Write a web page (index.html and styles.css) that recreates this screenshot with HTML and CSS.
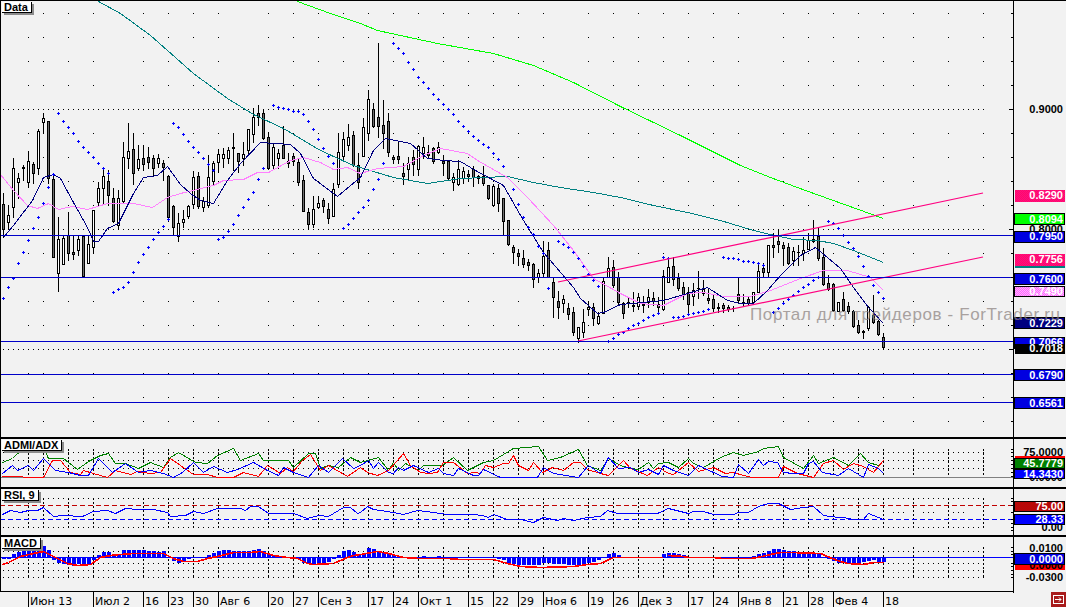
FILE: index.html
```html
<!DOCTYPE html>
<html lang="ru">
<head>
<meta charset="utf-8">
<title>Data</title>
<link rel="stylesheet" href="styles.css">
</head>
<body>
<div class="terminal">
  <section class="panel panel-main">
    <svg id="main" class="plot" data-top="1" data-height="436"></svg>
    <div class="legend">Data</div>
  </section>
  <section class="panel panel-sub">
    <svg id="adx" class="plot" data-top="439" data-height="48"></svg>
    <div class="legend">ADMI/ADX</div>
  </section>
  <section class="panel panel-sub">
    <svg id="rsi" class="plot" data-top="489" data-height="46"></svg>
    <div class="legend">RSI, 9</div>
  </section>
  <section class="panel panel-sub">
    <svg id="macd" class="plot" data-top="537" data-height="54"></svg>
    <div class="legend">MACD</div>
  </section>
  <footer class="time-row">
    <svg id="time" class="time-scale" width="1014" height="15" viewBox="0 592 1014 15"></svg>
    <button class="corner" type="button" aria-label="Вперёd">
      <svg width="15" height="15" viewBox="0 0 15 15">
        <rect class="corner-frame" x="2.5" y="3.5" width="10" height="8"></rect>
        <path class="corner-arrow" d="M4 7.5h6M8 5.5l2 2-2 2"></path>
      </svg>
    </button>
  </footer>
</div>
<script src="chart.js"></script>
</body>
</html>
```

FILE: styles.css
```css
html, body {
  margin: 0;
  padding: 0;
  height: 607px;
  overflow: hidden;
  background: #f2f2f2;
}

.terminal {
  display: flex;
  flex-direction: column;
  width: 1066px;
  height: 607px;
}

.panel {
  position: relative;
  border-left: 1px solid #000;
}

.panel-main {
  border-top: 1px solid #000;
}

.panel-sub {
  border-top: 2px solid #000;
}

.plot {
  display: block;
}

.legend {
  position: absolute;
  left: 1px;
  top: 1px;
  height: 10px;
  padding: 0 3px 0 2px;
  background: #fff;
  border-right: 1px solid #000;
  border-bottom: 1px solid #000;
  box-shadow: 2px 2px 0 #8c8c8c;
  font: bold 11px/10px "Liberation Sans", Arial, sans-serif;
  color: #000;
  white-space: nowrap;
}

.time-row {
  display: flex;
  justify-content: space-between;
  align-items: flex-start;
  height: 16px;
}

.time-scale {
  display: block;
  border-top: 1px solid #000;
}

.corner {
  width: 15px;
  height: 15px;
  margin: 1px 0 0;
  padding: 0;
  border: 0;
  background: #a81c1c;
  display: block;
}

.corner svg {
  display: block;
}

.corner-frame {
  fill: none;
  stroke: #fff;
  shape-rendering: crispEdges;
}

.corner-arrow {
  fill: none;
  stroke: #fff;
}

/* chart marks */
.crisp {
  shape-rendering: crispEdges;
}

.ink { fill: #000; }
.body-up { fill: #fff; }
.body-down { fill: #6e6e6e; }
.sar { fill: #0000ff; }
.bars { fill: #0000ff; }

.line {
  fill: none;
  stroke-width: 1;
}

.line-bold { stroke-width: 1.6; }
.teal { stroke: #008080; }
.lime { stroke: #00ff00; }
.navy { stroke: #000080; }
.orchid { stroke: #ff80ff; }
.rose { stroke: #ff0080; stroke-width: 1.2; }
.level { stroke: #0000c8; }
.base { stroke: #808080; }
.dgreen { stroke: #008000; }
.red { stroke: #ff0000; }
.blue { stroke: #0000ff; }
.dashed-red { stroke: #c00000; stroke-dasharray: 5 3; }
.dashed-blue { stroke: #0000ff; stroke-dasharray: 5 3; }
.vdash { stroke: #000; stroke-dasharray: 2 2; fill: none; }
.axis { stroke: #000; fill: none; }

.price {
  font: bold 11px "Liberation Sans", Arial, sans-serif;
  text-anchor: end;
  fill: #000;
}

.price-light { fill: #fff; }

.tag-pink { fill: url(#chk-pink); }
.tag-lime { fill: #00ff00; stroke: #000; }
.tag-blue { fill: #0000e0; stroke: #000; }
.tag-teal { fill: #008080; }
.tag-light { fill: url(#chk-light); stroke: #000; }
.tag-navy { fill: #000080; stroke: #000; }
.tag-black { fill: #000; }
.tag-green { fill: #008000; stroke: #000; }
.tag-vivid { fill: #0000ff; stroke: #000; }
.tag-red { fill: #ff0000; }
.tag-dred { fill: url(#chk-red); stroke: #000; }

.chk-a { fill: #ff0d80; }
.chk-b { fill: #ff0a6a; }
.chk-c { fill: #ff66ff; }
.chk-d { fill: #ffb0ff; }
.chk-e { fill: #c80000; }
.chk-f { fill: #a81010; }

.watermark {
  font: 17px "Liberation Sans", Arial, sans-serif;
  fill: #8c8280;
  opacity: 0.72;
}

.time-label {
  font: 11px "DejaVu Sans", sans-serif;
  fill: #000;
}
```

FILE: chart.js
```js
(function () {
  var candleData = `3 193 204 229 237 1|8 205 215 222 228 0|13 158 168 207 217 0|18 173 178 182 198 0|23 165 167 168 180 1|28 151 161 182 187 0|33 162 164 173 183 1|38 129 131 168 174 0|43 113 118 122 132 0|48 121 121 178 183 1|53 173 179 257 257 1|58 217 239 273 291 0|63 235 238 264 264 0|68 212 235 253 260 1|73 235 252 254 259 1|78 235 239 250 255 0|83 235 236 276 277 1|88 236 244 263 263 0|93 210 210 247 253 0|98 182 188 202 205 0|103 168 176 188 204 0|108 170 181 195 205 1|113 188 198 221 222 1|118 190 198 225 228 0|123 142 157 201 202 0|128 123 151 158 168 0|133 133 149 173 184 1|138 145 159 168 170 0|143 145 158 164 170 1|148 147 157 162 168 1|153 155 158 168 175 1|158 154 158 163 167 0|163 160 163 167 180 1|168 175 176 217 221 1|173 205 206 227 235 1|178 213 223 236 241 0|183 210 219 222 227 0|188 205 206 216 218 0|193 171 177 204 208 0|198 172 176 206 208 1|203 197 201 207 211 0|208 155 177 205 207 0|213 161 163 181 185 0|218 149 154 162 172 0|223 148 154 158 167 0|228 147 150 158 163 0|233 133 147 148 170 1|238 153 153 161 172 1|243 142 154 158 165 0|248 129 129 150 153 0|253 108 117 134 142 0|258 105 113 117 125 1|263 109 113 138 139 1|268 132 137 168 169 1|273 143 147 165 169 0|278 149 153 158 168 0|283 126 145 158 158 1|288 153 161 163 167 1|293 153 156 161 165 1|298 158 162 182 185 1|303 175 180 211 211 1|308 208 212 224 228 1|313 196 209 224 227 0|318 196 203 207 208 0|323 198 200 206 212 1|328 203 209 218 223 1|333 183 189 216 216 0|338 133 152 184 187 0|343 132 139 156 160 0|348 124 137 145 150 0|353 131 135 165 166 1|358 153 165 182 188 1|363 118 127 156 156 0|368 90 99 133 140 0|373 103 109 126 127 1|378 43 117 126 137 1|383 100 125 133 148 1|388 113 121 152 156 1|393 155 157 159 163 1|398 142 156 159 163 1|403 163 173 176 184 1|408 157 163 169 179 0|413 150 157 164 175 1|418 145 146 169 175 0|423 137 147 153 158 0|428 145 152 155 157 1|433 147 148 161 163 1|438 142 147 152 153 0|443 155 161 163 175 1|448 160 161 178 180 1|453 173 177 182 190 0|458 160 169 184 185 0|463 167 171 178 183 0|468 170 174 176 180 1|473 166 169 177 186 1|478 175 176 178 183 1|483 166 176 183 185 1|488 185 185 198 199 1|493 184 186 205 206 0|498 184 188 203 211 1|503 198 198 221 235 1|508 220 220 244 245 1|513 245 247 252 263 1|518 249 253 256 265 1|523 250 258 264 267 1|528 259 262 265 270 1|533 263 264 279 287 1|538 269 273 277 282 0|543 241 256 273 277 0|548 242 250 277 277 1|553 277 282 297 317 1|558 291 301 307 318 1|563 295 299 303 312 0|568 303 308 314 319 1|573 307 312 332 335 1|578 327 327 338 342 0|583 309 322 332 337 0|588 302 307 309 315 0|593 303 307 318 325 1|598 312 316 323 324 0|603 277 281 313 313 0|608 257 268 277 277 0|613 260 267 285 287 1|618 272 277 302 304 1|623 302 303 313 318 1|628 297 302 303 307 1|633 292 305 306 311 1|638 293 297 306 309 0|643 296 304 305 312 1|648 289 297 302 307 0|653 292 298 301 305 1|658 297 304 307 313 1|663 270 276 309 310 0|668 257 267 282 282 0|673 257 266 279 285 1|678 273 278 288 290 1|683 282 287 295 299 1|688 287 292 304 312 1|693 283 290 296 305 0|698 271 288 288 298 1|703 280 289 293 295 0|708 288 298 300 303 1|713 294 299 308 311 1|718 303 307 308 312 1|723 303 305 308 312 1|728 305 307 309 311 1|733 306 308 308 311 1|738 277 294 300 302 1|743 294 302 303 305 1|748 297 299 303 304 1|753 292 292 302 303 0|758 263 271 292 292 0|763 263 268 272 276 1|768 245 245 272 276 0|773 233 245 247 257 1|778 229 241 244 252 1|783 242 245 248 265 1|788 243 247 263 264 1|793 247 251 260 265 0|798 245 252 252 265 1|803 237 250 253 260 0|808 233 240 249 249 0|813 220 239 241 242 0|818 228 236 258 260 1|823 248 257 284 285 1|828 275 283 289 290 1|833 283 284 310 311 1|838 302 302 311 311 0|843 292 299 310 311 1|848 302 306 311 313 1|853 310 311 326 327 1|858 320 325 332 333 1|863 330 331 332 338 1|868 306 307 328 330 0|873 295 315 322 323 1|878 320 321 334 335 1|883 333 337 347 348 1`;

  var teal = [[98,1],[120,13],[150,35],[167,50],[193,73],[227,98],[253,114],[283,128],[320,150],[353,165],[393,177],[427,183],[460,178],[507,176],[533,182],[560,187],[593,192],[620,197],[653,205],[687,212],[720,220],[753,230],[770,234],[793,239],[817,240],[833,243],[853,250],[883,262]];
  var lime = [[297,1],[330,13],[360,23],[377,30],[437,43],[493,53],[533,65],[573,82],[620,106],[680,135],[740,165],[770,177],[805,190],[883,218]];
  var navy = [[3,237],[13,225],[32,200],[43,177],[53,174],[60,178],[73,202],[87,227],[93,241],[98,241],[107,228],[118,223],[133,193],[143,177],[157,175],[167,166],[180,184],[190,193],[200,200],[213,203],[227,180],[240,163],[260,142],[290,144],[300,153],[313,178],[337,196],[350,185],[360,177],[373,150],[385,138],[410,143],[427,158],[443,160],[460,161],[475,170],[503,185],[523,220],[543,252],[573,287],[580,298],[597,313],[603,312],[620,304],[663,300],[687,293],[707,287],[727,300],[740,303],[753,303],[767,290],[780,275],[800,255],[815,247],[840,268],[853,287],[868,307],[883,323]];
  var orchid = [[0,174],[13,190],[27,205],[37,208],[48,203],[58,209],[72,206],[87,209],[107,203],[133,203],[152,207],[167,197],[180,193],[213,185],[223,180],[243,179],[257,172],[268,172],[290,160],[303,157],[320,162],[333,169],[347,167],[360,173],[377,168],[403,166],[423,155],[440,148],[467,153],[477,160],[507,177],[527,197],[553,225],[573,250],[593,278],[620,293],[640,303],[663,305],[687,293],[703,292],[723,296],[750,296],[770,290],[800,278],[823,270],[847,270],[870,277],[883,290]];

  var sar = `3 298|8 287|13 278|18 263|23 252|28 240|33 228|38 217|43 203|48 187|53 174|58 113|63 121|68 127|73 133|78 141|83 147|88 152|93 157|98 163|103 168|108 173|113 292|118 289|123 287|128 282|133 272|138 262|143 254|148 247|153 239|158 232|163 226|168 219|173 123|178 127|183 134|188 141|193 147|198 152|203 158|208 164|213 170|218 239|223 237|228 231|233 224|238 215|243 207|248 199|253 192|258 179|263 168|273 105|278 107|283 108|288 109|293 111|298 111|303 114|308 121|313 129|318 139|323 148|328 156|333 163|343 228|348 224|353 218|358 212|363 207|368 200|373 189|378 179|383 163|393 43|398 48|403 53|408 62|413 69|418 77|423 82|428 88|433 94|438 99|443 104|448 109|453 114|458 121|463 126|468 131|473 136|478 140|483 144|488 147|493 153|498 159|503 166|513 189|518 204|523 217|528 227|533 234|538 246|543 253|548 288|558 241|563 244|568 247|573 252|578 258|583 266|588 274|593 280|598 286|608 341|613 338|618 334|623 332|628 328|633 325|638 323|643 320|648 317|653 315|658 313|663 257|668 258|673 317|678 317|683 316|688 314|693 313|698 312|703 311|708 309|723 257|728 258|733 258|738 259|743 261|748 261|753 262|758 263|763 265|773 312|778 308|783 303|788 299|793 295|798 291|803 287|808 284|813 280|818 277|828 221|833 223|838 228|843 235|848 242|853 248|858 256|863 266|868 276|873 285|878 292|883 298`;

  var xs = [28,43,68,93,143,168,193,218,268,293,318,343,368,393,418,443,468,493,518,543,588,613,638,663,688,713,738,783,808,833,858,883,913,948,983];

  /* indicator traces are read off the reference in three 3x crops */
  function crops(a, b, c, oy) {
    function map(list, ox) {
      return list.map(function (p) { return [ox + p[0] / 3, oy + p[1] / 3]; });
    }
    return map(a, 0).concat(map(b, 360).filter(function (p) { return p[0] > 360; }), map(c, 630).filter(function (p) { return p[0] > 630; }));
  }

  var adxGreen = crops(
    [[5,95],[35,85],[50,70],[85,55],[130,50],[145,85],[190,85],[230,118],[265,92],[300,75],[325,70],[345,100],[375,100],[415,115],[450,95],[490,112],[510,80],[535,65],[585,95],[620,100],[650,75],[700,55],[720,90],[775,68],[790,90],[865,90],[880,110],[925,70],[945,70],[960,115],[985,105],[1015,112],[1050,80],[1080,95]],
    [[55,80],[85,120],[100,95],[115,120],[135,100],[175,120],[190,105],[245,105],[280,80],[320,120],[370,95],[400,90],[460,55],[535,48],[560,90],[600,80],[655,58],[680,105],[720,120],[745,85],[780,105],[810,115]],
    [[25,118],[55,95],[70,115],[85,100],[115,95],[145,110],[175,85],[190,100],[220,112],[270,80],[310,65],[340,75],[385,62],[400,55],[445,48],[460,80],[520,115],[550,75],[565,100],[610,80],[655,105],[690,70],[715,95],[745,105],[760,90]], 430);
  var adxRed = crops(
    [[5,138],[130,140],[155,90],[180,90],[210,125],[240,132],[250,120],[280,130],[320,140],[345,120],[390,132],[410,122],[450,130],[480,125],[510,85],[540,105],[580,132],[620,132],[650,140],[700,140],[730,125],[775,138],[800,105],[840,128],[860,110],[880,122],[905,90],[930,72],[960,120],[985,105],[1040,138],[1080,110]],
    [[20,125],[50,135],[85,120],[130,70],[150,105],[180,125],[205,130],[230,125],[250,95],[280,95],[320,130],[345,125],[360,130],[375,105],[400,110],[430,100],[445,100],[460,75],[475,105],[505,120],[520,95],[545,125],[575,112],[610,120],[640,97],[660,97],[680,118],[720,128],[745,135],[790,90],[810,115]],
    [[50,135],[85,110],[115,128],[130,132],[175,95],[205,122],[250,112],[285,128],[310,125],[340,135],[365,140],[445,140],[460,108],[500,128],[550,140],[580,100],[610,90],[640,118],[670,98],[700,108],[730,125],[760,90]], 430);
  var adxBlue = crops(
    [[5,130],[35,105],[50,120],[85,105],[100,120],[130,85],[165,120],[205,125],[240,135],[265,135],[295,85],[335,125],[375,100],[415,125],[450,120],[490,130],[520,140],[545,125],[580,95],[610,125],[640,108],[680,125],[710,118],[760,95],[800,120],[835,135],[850,110],[880,125],[925,140],[955,105],[985,125],[1025,85],[1060,115],[1080,105]],
    [[25,90],[40,115],[55,97],[85,125],[100,130],[115,110],[130,120],[160,105],[205,125],[235,115],[250,130],[280,135],[295,115],[340,135],[355,135],[370,118],[420,140],[530,142],[550,112],[580,130],[655,140],[685,105],[720,130],[745,80],[775,115],[810,112]],
    [[25,125],[55,118],[85,132],[100,105],[130,120],[175,135],[205,105],[250,125],[275,138],[310,140],[325,102],[355,128],[385,88],[400,105],[415,92],[440,95],[460,125],[490,130],[520,130],[535,100],[550,92],[575,125],[625,135],[655,115],[700,140],[715,102],[745,115],[760,128]], 430);
  var rsiLine = crops(
    [[5,252],[30,240],[60,245],[85,240],[110,240],[130,232],[160,258],[190,255],[245,258],[280,242],[320,240],[345,248],[375,235],[410,238],[460,238],[500,245],[510,257],[555,255],[580,243],[610,248],[650,235],[720,235],[735,240],[750,227],[775,227],[805,250],[880,250],[920,265],[955,255],[985,258],[1030,232],[1050,232],[1070,248],[1080,245]],
    [[20,228],[40,238],[100,247],[130,253],[170,240],[220,245],[260,253],[335,253],[365,255],[385,262],[400,252],[440,268],[480,268],[520,275],[550,260],[590,270],[610,265],[640,270],[680,260],[720,258],[740,240],[770,250],[810,250]],
    [[50,248],[80,250],[115,235],[175,250],[190,243],[220,243],[250,253],[310,253],[325,245],[355,245],[385,228],[415,220],[445,220],[480,238],[520,232],[550,227],[580,255],[625,262],[640,262],[670,268],[700,268],[715,248],[760,268]], 430);
  var macdSignal = crops(
    [[5,403],[25,395],[60,378],[100,368],[130,362],[160,378],[200,398],[230,404],[270,403],[300,382],[330,375],[360,372],[400,368],[490,368],[520,385],[550,392],[590,392],[620,385],[650,378],[700,366],[750,366],[780,362],[820,375],[860,380],[890,385],[920,398],[940,402],[1000,400],[1040,380],[1060,375],[1080,373]],
    [[50,362],[85,368],[130,380],[180,385],[260,385],[300,388],[400,388],[440,398],[480,408],[540,410],[640,408],[680,403],[720,400],[760,382]],
    [[95,380],[115,375],[160,378],[175,380],[245,380],[275,385],[360,385],[380,380],[420,372],[450,365],[480,365],[570,370],[590,378],[620,390],[650,398],[700,403],[730,397],[760,397]], 430);

  var hist = [-2,-2,3,5,6,7,8,9,11,7,-3,-6,-7,-8,-9,-7,-8,-8,-3,2,5,5,3,3,7,7,7,7,7,6,6,5,6,0,-4,-6,-5,-2,0,0,0,2,4,6,7,7,6,6,6,6,7,8,6,3,2,1,0,0,0,-2,-6,-6,-7,-6,-6,-5,-2,2,6,7,5,3,
    4,9,8,6,5,3,2,0,-1,-1,0,0,1,0,0,1,-1,-1,-1,-1,-1,-1,-1,-1,-1,-1,-1,-2,-3,-6,-7,-8,-8,-8,-8,-8,-6,-6,-7,-7,-7,-8,-8,-8,-7,-6,-5,-3,0,3,4,2,0,0,
    0,0,0,0,0,0,3,4,4,3,2,0,0,0,0,0,0,-1,-1,-1,0,0,0,0,1,3,4,6,8,8,7,6,6,5,5,5,4,3,0,-2,-4,-6,-5,-6,-6,-6,-5,-4,-3,-5,-5];

  function rect(x, y, w, h) {
    return 'M' + x + ' ' + y + 'h' + w + 'v' + h + 'h' + (-w) + 'z';
  }
  function path(cls, d) {
    return '<path class="' + cls + '" d="' + d + '"></path>';
  }
  function poly(cls, pts) {
    var d = pts.map(function (p, i) {
      return (i ? 'L' : 'M') + (Math.round(p[0]) + 0.5) + ' ' + (Math.round(p[1]) + 0.5);
    }).join('');
    return path('line crisp ' + cls, d);
  }
  function seg(cls, x1, y1, x2, y2) {
    return path('line crisp ' + cls, 'M' + x1 + ' ' + (y1 + 0.5) + 'L' + x2 + ' ' + (y2 + 0.5));
  }
  function dotRow(y, from, to) {
    var d = '';
    for (var x = from; x <= to; x += 5) d += rect(x, y, 1, 1);
    return d;
  }
  function tag(cls, y, h, text, textCls, baseline) {
    var out = '<rect class="crisp ' + cls + '" x="1014.5" y="' + (y + 0.5) + '" width="50" height="' + h + '"></rect>';
    if (text) out += '<text class="price ' + (textCls || '') + '" x="1063" y="' + (baseline || y + h - 1) + '">' + text + '</text>';
    return out;
  }
  function label(text, y) {
    return '<text class="price" x="1063" y="' + y + '">' + text + '</text>';
  }
  function ticks(ys, majors) {
    var d = '';
    ys.forEach(function (y) {
      var long = majors && majors.indexOf(y) >= 0;
      d += rect(long ? 1009 : 1011, y, long ? 4 : 2, 1);
    });
    return path('ink crisp', d);
  }
  function axisLine(top, bottom) {
    return path('ink crisp', rect(1013, top, 1, bottom - top));
  }
  function subGrid(rows, top, bottom) {
    var d = '';
    rows.forEach(function (y) { d += dotRow(y, 3, 983); });
    var out = path('ink crisp', d);
    var v = xs.map(function (x) { return 'M' + (x + 0.5) + ' ' + top + 'V' + bottom; }).join('');
    return out + path('vdash crisp', v);
  }

  /* ---------- main panel ---------- */
  var m = '<defs>' +
    '<pattern id="chk-pink" width="2" height="2" patternUnits="userSpaceOnUse"><rect class="chk-a" width="2" height="2"></rect><rect class="chk-b" width="1" height="1"></rect><rect class="chk-b" x="1" y="1" width="1" height="1"></rect></pattern>' +
    '<pattern id="chk-light" width="2" height="2" patternUnits="userSpaceOnUse"><rect class="chk-c" width="2" height="2"></rect><rect class="chk-d" width="1" height="1"></rect><rect class="chk-d" x="1" y="1" width="1" height="1"></rect></pattern>' +
    '<pattern id="chk-red" width="2" height="2" patternUnits="userSpaceOnUse"><rect class="chk-e" width="2" height="2"></rect><rect class="chk-f" width="1" height="1"></rect><rect class="chk-f" x="1" y="1" width="1" height="1"></rect></pattern>' +
    '</defs>';

  var gd = '', tickYs = [];
  for (var k = 0; k * 24 + 13 < 430; k++) {
    var ry = 13 + k * 24;
    tickYs.push(ry);
    if ([109, 229, 349].indexOf(ry) >= 0) {
      gd += dotRow(ry, 3, 983);
    } else {
      xs.forEach(function (x) { gd += rect(x, ry, 1, 1); });
    }
  }
  m += path('ink crisp', gd);

  var wicks = '', ups = '', downs = '', outlines = '';
  candleData.split('|').forEach(function (row) {
    var c = row.split(' ').map(Number);
    var x = c[0], hi = c[1], t = c[2], b = c[3], lo = c[4], dark = c[5];
    wicks += rect(x, hi, 1, lo - hi + 1);
    outlines += rect(x - 1, t, 3, Math.max(1, b - t + 1));
    if (b - t >= 2) {
      var inner = rect(x, t + 1, 1, b - t - 1);
      if (dark) downs += inner; else ups += inner;
    }
  });
  m += path('ink crisp', wicks + outlines) + path('body-up crisp', ups) + path('body-down crisp', downs);

  m += poly('teal', teal) + poly('lime', lime) + poly('orchid', orchid) + poly('navy', navy);

  var sd = '';
  sar.split('|').forEach(function (row) {
    var p = row.split(' ').map(Number);
    sd += rect(p[0] - 1, p[1], 3, 1) + rect(p[0], p[1] - 1, 1, 3);
  });
  m += path('sar crisp', sd);

  m += path('line rose', 'M558 282L983 193') + path('line rose', 'M578 341L983 257');
  [235, 277, 341, 374, 402].forEach(function (y) { m += seg('level', 0, y, 1013, y); });

  m += axisLine(0, 438) + ticks(tickYs, [109, 229, 349]);
  m += label('0.9000', 113);
  m += tag('tag-pink', 189, 12, '0.8290', 'price-light', 199);
  m += label('0.8000', 233);
  m += tag('tag-lime', 213, 11, '0.8094', 'price-light', 223);
  m += tag('tag-blue', 231, 11, '0.7950', 'price-light', 240);
  m += tag('tag-teal', 259, 8, '', '');
  m += tag('tag-pink', 253, 12, '0.7756', 'price-light', 263);
  m += tag('tag-blue', 273, 11, '0.7600', 'price-light', 283);
  m += tag('tag-light', 286, 10, '0.7490', 'price-light', 295);
  m += tag('tag-navy', 317, 11, '0.7229', 'price-light', 327);
  m += tag('tag-blue', 337, 11, '0.7066', 'price-light', 346);
  m += tag('tag-black', 343, 10, '0.7018', 'price-light', 352);
  m += tag('tag-blue', 369, 11, '0.6790', 'price-light', 379);
  m += tag('tag-blue', 397, 11, '0.6561', 'price-light', 407);
  m += '<text class="watermark" x="750" y="320" textLength="310" lengthAdjust="spacing">Портал для трейдеров - ForTrader.ru</text>';
  setPlot('main', m);

  /* ---------- ADX ---------- */
  var a = subGrid([452, 460, 468], 449, 476);
  a += seg('base', 0, 477, 1013, 477);
  a += poly('dgreen', adxGreen) + poly('red', adxRed) + poly('blue', adxBlue);
  a += axisLine(438, 488) + ticks([449, 452, 456, 460, 464, 468, 472, 476]);
  a += label('75.0000', 456) + label('0.0000', 481);
  a += tag('tag-red', 455, 2, '', '');
  a += tag('tag-green', 458, 10, '45.7779', 'price-light', 467);
  a += tag('tag-vivid', 469, 9, '14.3430', 'price-light', 478);
  setPlot('adx', a);

  /* ---------- RSI ---------- */
  var r = subGrid([498, 527], 498, 529);
  var sparse = dotRow(512, 893, 903) + dotRow(512, 923, 933) + dotRow(512, 953, 963);
  r += path('ink crisp', sparse);
  r += seg('dashed-red', 0, 505, 1013, 505) + seg('dashed-blue', 0, 519, 1013, 519);
  r += poly('blue', rsiLine);
  r += axisLine(488, 536) + ticks([498, 501, 505, 512, 519, 523, 527, 530]);
  r += label('0.00', 531);
  r += tag('tag-dred', 501, 10, '75.00', 'price-light', 510);
  r += tag('tag-vivid', 514, 10, '28.33', 'price-light', 523);
  setPlot('rsi', r);

  /* ---------- MACD ---------- */
  var g = subGrid([551, 563, 570, 577], 547, 578);
  var bars = '';
  hist.forEach(function (v, i) {
    if (!v) return;
    var x = 2 + i * 5;
    bars += v > 0 ? rect(x, 557 - v, 4, v) : rect(x, 557, 4, -v);
  });
  g += path('bars crisp', bars);
  g += seg('blue', 0, 557, 1013, 557);
  g += poly('red line-bold', macdSignal.slice(0, 46));
  g += poly('red line-bold', macdSignal.slice(46));
  g += axisLine(536, 592) + ticks([547, 551, 554, 563, 566, 570, 574, 577]);
  g += label('0.0100', 552) + label('-0.0300', 581);
  g += tag('tag-red', 564, 5, '', '');
  g += label('0.0000', 569);
  g += tag('tag-blue', 553, 11, '0.0000', 'price-light', 563);
  setPlot('macd', g);

  /* ---------- time axis ---------- */
  var stamps = [[28,'Июн 13'],[93,'Июл 2'],[143,'16'],[168,'23'],[193,'30'],[218,'Авг 6'],[268,'20'],[293,'27'],[318,'Сен 3'],[368,'17'],[393,'24'],[418,'Окт 1'],[468,'15'],[493,'22'],[518,'29'],[543,'Ноя 6'],[588,'19'],[613,'26'],[638,'Дек 3'],[688,'17'],[713,'24'],[738,'Янв 8'],[783,'21'],[808,'28'],[833,'Фев 4'],[883,'18']];
  var t = '', sep = '';
  stamps.forEach(function (s) {
    sep += rect(s[0], 592, 1, 15);
    t += '<text class="time-label" x="' + (s[0] + 2) + '" y="605">' + s[1] + '</text>';
  });
  sep += rect(1013, 592, 1, 1);
  document.getElementById('time').innerHTML = path('ink crisp', sep) + t;

  function setPlot(id, html) {
    var el = document.getElementById(id);
    var top = +el.getAttribute('data-top');
    var h = +el.getAttribute('data-height');
    el.setAttribute('width', 1065);
    el.setAttribute('height', h);
    el.setAttribute('viewBox', '1 ' + top + ' 1065 ' + h);
    el.innerHTML = html;
  }
})();
```
